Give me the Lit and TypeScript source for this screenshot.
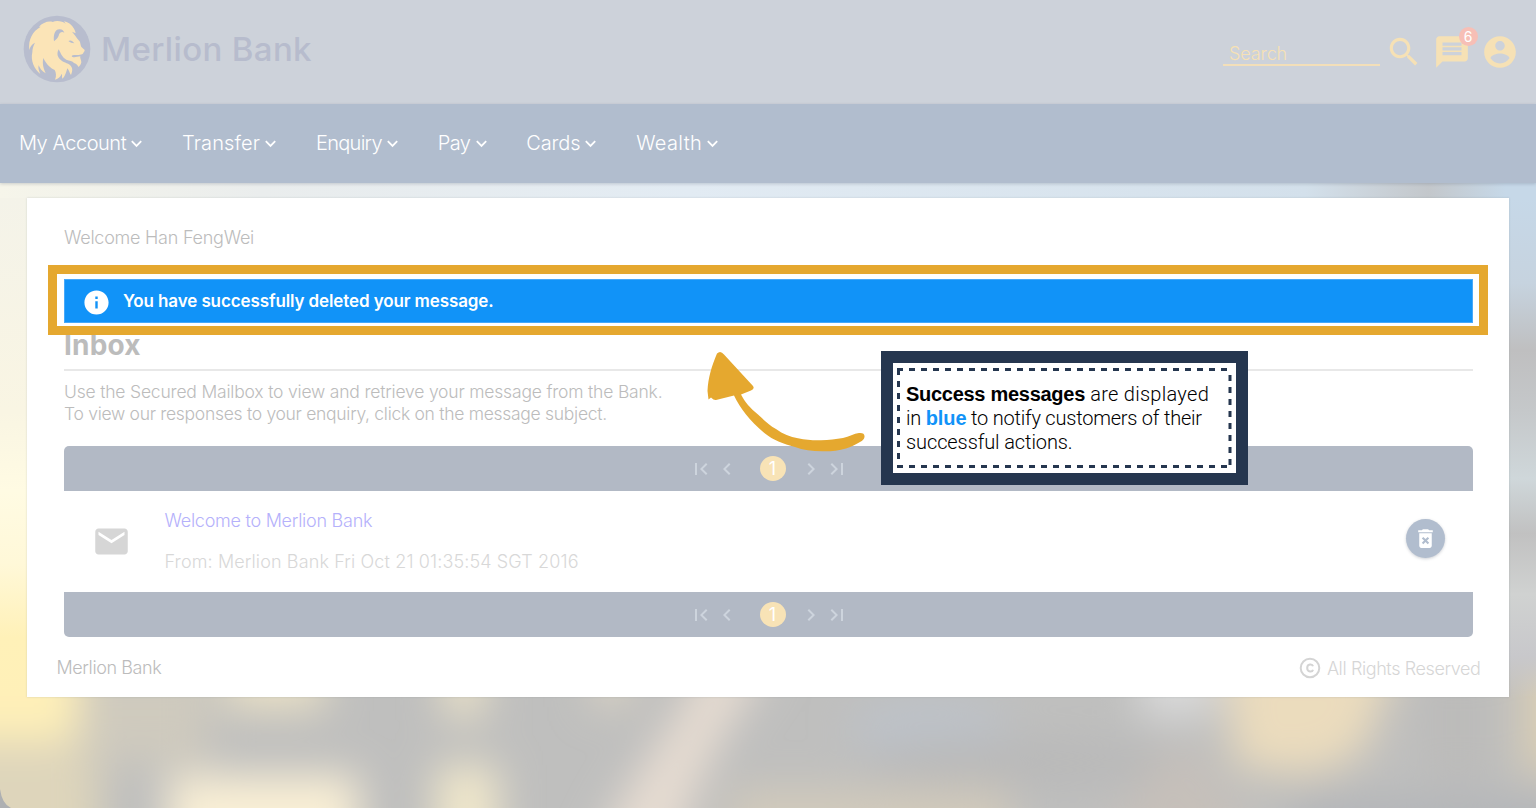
import { LitElement, html, css, svg } from "lit";
import { customElement, property } from "lit/decorators.js";
import { styleMap } from "lit/directives/style-map.js";

const ICONS: Record<string, string> = {
  search:
    "M15.5 14h-.79l-.28-.27C15.41 12.59 16 11.11 16 9.5 16 5.91 13.09 3 9.5 3S3 5.91 3 9.5 5.91 16 9.5 16c1.61 0 3.09-.59 4.23-1.57l.27.28v.79l5 4.99L20.49 19l-4.99-5zm-6 0C7.01 14 5 11.99 5 9.5S7.01 5 9.5 5 14 7.01 14 9.5 11.99 14 9.5 14z",
  message:
    "M20 2H4c-1.1 0-1.99.9-1.99 2L2 22l4-4h14c1.1 0 2-.9 2-2V4c0-1.1-.9-2-2-2zm-2 12H6v-2h12v2zm0-3H6V9h12v2zm0-3H6V6h12v2z",
  account:
    "M12 2C6.48 2 2 6.48 2 12s4.48 10 10 10 10-4.48 10-10S17.52 2 12 2zm0 3c1.66 0 3 1.34 3 3s-1.34 3-3 3-3-1.34-3-3 1.34-3 3-3zm0 14.2c-2.5 0-4.71-1.28-6-3.22.03-1.99 4-3.08 6-3.08 1.99 0 5.97 1.09 6 3.08-1.29 1.94-3.5 3.22-6 3.22z",
  info: "M12 2C6.48 2 2 6.48 2 12s4.48 10 10 10 10-4.48 10-10S17.52 2 12 2zm1 15h-2v-6h2v6zm0-8h-2V7h2v2z",
  first: "M18.41 16.59L13.82 12l4.59-4.59L17 6l-6 6 6 6zM6 6h2v12H6z",
  prev: "M15.41 7.41L14 6l-6 6 6 6 1.41-1.41L10.83 12z",
  next: "M10 6L8.59 7.41 13.17 12l-4.58 4.59L10 18l6-6z",
  last: "M5.59 7.41L10.18 12l-4.59 4.59L7 18l6-6-6-6zM16 6h2v12h-2z",
  mail: "M20 4H4c-1.1 0-1.99.9-1.99 2L2 18c0 1.1.9 2 2 2h16c1.1 0 2-.9 2-2V6c0-1.1-.9-2-2-2zm0 4l-8 5-8-5V6l8 5 8-5v2z",
  trash:
    "M6 19c0 1.1.9 2 2 2h8c1.1 0 2-.9 2-2V7H6v12zm2.46-7.12l1.41-1.41L12 12.59l2.12-2.12 1.41 1.41L13.41 14l2.12 2.12-1.41 1.41L12 15.41l-2.12 2.12-1.41-1.41L10.59 14l-2.13-2.12zM15.5 4l-1-1h-5l-1 1H5v2h14V4z",
};

@customElement("mb-icon")
class MbIcon extends LitElement {
  @property() name = "";
  static styles = css`
    :host { display: block; width: 24px; height: 24px; flex: none; }
    svg { display: block; width: 100%; height: 100%; fill: currentColor; }
  `;
  render() {
    return html`<svg viewBox="0 0 24 24"><path d=${ICONS[this.name] ?? ""} /></svg>`;
  }
}

@customElement("mb-pager")
class MbPager extends LitElement {
  static styles = css`
    :host {
      display: flex; align-items: center; justify-content: center;
      height: 45px; box-sizing: border-box; background: #b2b9c5; color: #cdd4dd;
    }
    .prev { margin-left: 2px; }
    .page {
      width: 26px; height: 25px; margin: 0 13px 0 21px; border-radius: 50%;
      background: #f8e3b6; color: #fff; display: grid; place-items: center;
      font: 400 18px/25px Inter, sans-serif;
    }
    .last { margin-left: 2px; }
  `;
  render() {
    return html`
      <mb-icon name="first"></mb-icon>
      <mb-icon class="prev" name="prev"></mb-icon>
      <span class="page">1</span>
      <mb-icon name="next"></mb-icon>
      <mb-icon class="last" name="last"></mb-icon>
    `;
  }
}

const backdrop = svg`
  <defs>
    <filter id="soft" filterUnits="userSpaceOnUse" x="-100" y="300" width="1736" height="450"><feGaussianBlur stdDeviation="20" /></filter>
    <linearGradient id="sky" x1="0" x2="1" y1="0" y2="0">
      <stop offset="0" stop-color="#f6f5ea" /><stop offset=".17" stop-color="#eaeded" />
      <stop offset=".45" stop-color="#e2ebf3" /><stop offset=".85" stop-color="#d3e0eb" />
      <stop offset=".93" stop-color="#c3c7cb" /><stop offset=".98" stop-color="#c6d8e8" />
    </linearGradient>
    <linearGradient id="west" gradientUnits="userSpaceOnUse" x1="0" x2="0" y1="15" y2="625">
      <stop offset="0" stop-color="#f4f3e9" /><stop offset=".35" stop-color="#f9f5e3" />
      <stop offset=".48" stop-color="#fffbe3" /><stop offset=".6" stop-color="#fff8d8" />
      <stop offset=".72" stop-color="#fff1b8" /><stop offset=".82" stop-color="#fff1b8" stop-opacity="0" />
    </linearGradient>
    <linearGradient id="east" gradientUnits="userSpaceOnUse" x1="0" x2="0" y1="15" y2="625">
      <stop offset="0" stop-color="#c6d8e8" /><stop offset=".14" stop-color="#c6d3df" />
      <stop offset=".25" stop-color="#bfbfc0" /><stop offset=".35" stop-color="#c5c8ca" />
      <stop offset=".46" stop-color="#cfd7da" /><stop offset=".55" stop-color="#c1c1c1" />
      <stop offset=".65" stop-color="#d0d2d1" /><stop offset=".75" stop-color="#c8c8cb" />
      <stop offset=".82" stop-color="#c8c8cb" stop-opacity="0" />
    </linearGradient>
  </defs>
  <rect width="1536" height="625" fill="#bfbfbe" />
  <rect width="1536" height="60" fill="url(#sky)" />
  <g filter="url(#soft)">
    <rect x="-90" y="400" width="168" height="156" fill="#fff0b8" />
    <rect x="-90" y="556" width="190" height="150" fill="#ded5bb" />
    <rect x="78" y="480" width="130" height="100" fill="#cfcabe" />
    <rect x="225" y="440" width="100" height="88" fill="#e9e0c6" />
    <rect x="444" y="440" width="40" height="96" fill="#ebe2c8" />
    <rect x="592" y="440" width="40" height="84" fill="#dad3c4" />
    <path d="M702 480h70C714 560 688 610 676 680h-84C618 600 670 560 702 480z" fill="#e6dcd1" />
    <ellipse cx="930" cy="545" rx="80" ry="30" fill="#bdc2c9" />
    <ellipse cx="1030" cy="580" rx="170" ry="26" fill="#b9b9b9" />
    <rect x="1140" y="450" width="74" height="84" fill="#dadada" />
    <path d="M1222 470h180l-40 100-50 22-76-8z" fill="#ebdcbd" />
    <rect x="1425" y="480" width="66" height="120" fill="#bcbbba" />
    <path d="M1524 470H1620V590H1524z" fill="#dccfb4" />
    <rect x="168" y="592" width="190" height="120" fill="#f9efd5" />
    <rect x="436" y="582" width="62" height="120" fill="#f0e7cb" />
    <rect x="730" y="606" width="280" height="80" fill="#d2cabb" />
    <path d="M1080 680L1180 556L1250 640V680z" fill="#c6c0ba" />
    <rect x="1290" y="612" width="300" height="80" fill="#b4b6b9" />
  </g>
  <rect width="27" height="500" y="15" fill="url(#west)" />
  <rect x="1509" y="15" width="27" height="500" fill="url(#east)" />
  <path d="M0 606Q2 621 11 625H0z" fill="#aeb0b2" />
`;

@customElement("app-root")
class AppRoot extends LitElement {
  private menu = [
    { label: "My Account", tracking: -0.48 },
    { label: "Transfer", tracking: 0.15 },
    { label: "Enquiry", tracking: -0.7 },
    { label: "Pay", tracking: -0.5 },
    { label: "Cards", tracking: -0.15 },
    { label: "Wealth", tracking: 0.35 },
  ];

  static styles = css`
    :host {
      display: block; position: relative; width: 1536px; height: 808px; overflow: hidden;
      font-family: Inter, "Open Sans", sans-serif; font-weight: 300; white-space: nowrap;
    }
    header {
      height: 104px; background: #cdd2da; display: flex; align-items: center;
      box-sizing: border-box; padding: 0 17px 0 23px; color: #f6e1b5;
    }
    .logo { width: 68px; height: 68px; margin-bottom: 7px; }
    .brand {
      margin: 0 0 6px 10px; font-weight: 500; font-size: 33px; line-height: 40px; color: #b7bccd;
      letter-spacing: 0.35px; flex: 1;
    }
    .search {
      width: 151px; height: 24px; padding-left: 6px; border-bottom: 2px solid #f3dfb9;
      font-size: 18px; line-height: 28px; margin-top: 1px; letter-spacing: -0.1px;
    }
    .tool { width: 38px; height: 38px; }
    .tool.find { margin-left: 5px; }
    .inbox { position: relative; margin: 0 10px; }
    .badge {
      position: absolute; left: 25.5px; top: -6px; width: 19px; height: 19px; border-radius: 50%;
      background: #f7bfb6; color: #fff; font-size: 14px; line-height: 19px; text-align: center; font-weight: 400;
    }
    nav {
      height: 79px; background: #b1bdce; color: #fff; padding: 0 0 2px 19px; display: flex; gap: 39.8px;
      font-size: 20px; box-shadow: 0 1px 3px rgba(80, 90, 110, .25); position: relative; z-index: 1;
      align-items: center; box-sizing: border-box;
    }
    .item { display: flex; align-items: center; gap: 5px; line-height: 26px; }
    .caret { width: 11px; height: 8px; fill: none; stroke: #fff; stroke-width: 1.8; margin-top: 3px; }
    .stage { position: relative; height: 625px; box-sizing: border-box; padding: 15px 27px 0; }
    .sky { position: absolute; left: 0; top: 0; width: 1536px; height: 625px; }
    .card {
      position: relative; height: 499px; box-sizing: border-box; padding: 29px 36px 0 37px; background: #fff;
      box-shadow: 0 0 2px rgba(100, 110, 120, .25); color: #bcbcbc;
      font-size: 18px;
    }
    .hello { line-height: 22px; height: 22px; letter-spacing: -0.25px; }
    .alert {
      position: relative; z-index: 2; margin-top: 30px; height: 44px; box-sizing: border-box;
      border: 1px solid #47a9fa; background: #1193f8; color: #fff; display: flex; align-items: center;
      padding-left: 17px; font-weight: 600; font-size: 17px; letter-spacing: -0.11px;
    }
    .alert mb-icon { width: 29px; height: 29px; margin-top: 2px; }
    .alert span { margin-left: 12px; }
    h1 { margin: 5px 0 0; font-size: 28px; line-height: 34px; height: 34px; font-weight: 700; letter-spacing: 0.2px; }
    .rule { margin-top: 7px; height: 2px; background: #e8e8e8; }
    .intro { margin: 10px 0 0; font-size: 17.5px; line-height: 22px; height: 44px; letter-spacing: -0.19px; }
    .intro .tight { letter-spacing: -0.29px; }
    .top { margin-top: 21px; border-radius: 5px 5px 0 0; }
    .bottom { border-radius: 0 0 5px 5px; }
    .row { height: 101px; display: flex; align-items: flex-start; }
    .mail { width: 39px; height: 39px; margin: 30.5px 0 0 28px; color: #d6d6d6; }
    .text { margin: 19px 0 0 33.5px; flex: 1; line-height: 22px; }
    .subject { color: #b5b1fb; letter-spacing: -0.26px; }
    .from { margin-top: 19px; color: #d8d8d8; letter-spacing: 0.12px; }
    .remove {
      width: 39px; height: 39px; border-radius: 50%; background: #b1bdce; color: #fff;
      margin: 28px 28px 0 0; display: grid; place-items: center; box-shadow: 0 1px 3px rgba(60, 70, 90, .25);
    }
    .remove mb-icon { width: 25px; height: 25px; }
    footer {
      display: flex; align-items: center; justify-content: space-between;
      margin: 19px -7.5px 0 -7.5px; height: 24px; letter-spacing: -0.4px;
    }
    .owner { margin-bottom: 2px; }
    .rights { display: flex; align-items: center; gap: 6px; color: #d6d6d6; }
    .copy { width: 22px; height: 22px; }
    .frame {
      position: absolute; z-index: 1; left: 48px; top: 265px; width: 1440px; height: 70px;
      box-sizing: border-box; border: 9px solid #e5a82f; background: #fff;
    }
    .arrow { position: absolute; left: 700px; top: 345px; width: 170px; height: 112px; }
    .note {
      position: absolute; left: 881px; top: 351px; width: 367px; height: 134px; box-sizing: border-box;
      border: 12px solid #25364f; background: #fff; color: #000; padding: 19px 0 0 13px;
      font-family: Roboto, sans-serif; font-size: 20px; line-height: 24px;
    }
    .note b { font-family: "Liberation Sans", Arial, sans-serif; font-weight: 700; letter-spacing: -0.28px; }
    .note .blue { color: #1193f8; letter-spacing: -0.1px; }
    .loose { letter-spacing: 0.28px; }
    .snug { letter-spacing: -0.22px; }
    .even { letter-spacing: -0.1px; }
    .dashes { position: absolute; left: 0; top: 0; width: 343px; height: 110px; }
  `;

  private logo() {
    return html`<svg class="logo" viewBox="69 43 204 204">
      <circle cx="171" cy="145" r="100" fill="#b8bdce" />
      <path fill="#fbe4b7" d="M88 148C84 116 98 92 122 78L117 78C127 67 145 60 158 64C170 58 188 62 197 69L192 62C206 64 224 78 227 98L216 93C224 102 229 110 236 119C243 124 240 134 245 140L254 148C254 153 251 154 250 157C247 163 235 163 222 163C217 164 214 165 216 168C224 173 232 167 241 167C239 172 244 178 244 185C243 192 239 196 236 199C232 192 227 189 222 187C218 181 208 180 199 177C188 172 183 160 176 146C170 158 172 168 180 176C188 186 203 186 212 195C220 204 216 214 213 223C208 216 207 208 202 203C199 212 197 224 188 234C184 229 188 222 185 220C181 229 176 234 165 237C170 226 168 216 164 208C153 203 140 193 130 172C126 190 131 204 137 218C125 211 119 202 116 194C113 204 118 212 121 220C103 205 91 181 97 155C97 143 101 133 105 126C96 130 90 139 88 148Z" />
      <path fill="#b8bdce" d="M162 122C160 104 164 86 178 86C186 85 191 91 193 96C185 91 177 97 176 105C174 112 168 116 162 122ZM205 121C211 117 218 120 223 128C216 126 211 127 205 121Z" />
    </svg>`;
  }

  render() {
    return html`
      <header>
        ${this.logo()}
        <div class="brand">Merlion Bank</div>
        <div class="search">Search</div>
        <mb-icon class="tool find" name="search"></mb-icon>
        <div class="inbox">
          <mb-icon class="tool" name="message"></mb-icon>
          <span class="badge">6</span>
        </div>
        <mb-icon class="tool" name="account"></mb-icon>
      </header>
      <nav>
        ${this.menu.map(
          ({ label, tracking }) => html`<div class="item">
            <span style=${styleMap({ letterSpacing: `${tracking}px` })}>${label}</span>
            <svg class="caret" viewBox="0 0 11 8"><path d="M.8 1.2l4.700 4.800L10.200 1.200" /></svg>
          </div>`
        )}
      </nav>
      <div class="stage">
        <svg class="sky" viewBox="0 0 1536 625">${backdrop}</svg>
        <main class="card">
          <div class="hello">Welcome Han FengWei</div>
          <div class="alert">
            <mb-icon name="info"></mb-icon><span>You have successfully deleted your message.</span>
          </div>
          <h1>Inbox</h1>
          <div class="rule"></div>
          <p class="intro">
            Use the Secured Mailbox to view and retrieve your message from the Bank.<br /><span class="tight"
              >To view our responses to your enquiry, click on the message subject.</span
            >
          </p>
          <mb-pager class="top"></mb-pager>
          <div class="row">
            <mb-icon class="mail" name="mail"></mb-icon>
            <div class="text">
              <div class="subject">Welcome to Merlion Bank</div>
              <div class="from">From: Merlion Bank Fri Oct 21 01:35:54 SGT 2016</div>
            </div>
            <div class="remove"><mb-icon name="trash"></mb-icon></div>
          </div>
          <mb-pager class="bottom"></mb-pager>
          <footer>
            <span class="owner">Merlion Bank</span>
            <span class="rights">
              <svg class="copy" viewBox="0 0 22 22" fill="none" stroke="#d4d4d4" stroke-width="2">
                <circle cx="11" cy="11" r="9.3" />
                <path d="M14 9.2C13.4 6.8 8.2 6.5 8.2 11s5.2 4.2 5.8 1.8" />
              </svg>
              <span>All Rights Reserved</span>
            </span>
          </footer>
        </main>
      </div>
      <div class="frame"></div>
      <svg class="arrow" viewBox="700 345 170 112" fill="#e5a82f">
        <path d="M717 353.5Q720.5 350 724 354.5L753 386Q755 389 751 390.5L741 394.5C745 402 750 408 758 414.5C764 420 769 425 776 429C783 434 790 437 798 438.3C806 440 813 440.5 821 440.3C829 440 836 439 843 438C849 436.5 854 433.5 859 433Q865 432.5 864.5 437Q864 440 860 442C855 445 851 447 846 448.5C838 451 830 451.5 822 451.3C812 451 803 450 795 447C783 444 773 440 765 433.5C757 427 751 421 746 414.5C741 408 737 402 734 395.5L716 400Q714 400.5 711 397.5L708.5 399.5L707.5 391C708 378 712 365 717 353.5Z" />
      </svg>
      <aside class="note">
        <svg class="dashes" viewBox="0 0 343 110" fill="none" stroke="#25364f" stroke-width="3">
          <path stroke-dasharray="6 6" d="M4 6.5H338M337 12V104M4 103.5H338M5.5 6V104" />
        </svg>
        <b>Success messages</b><span class="loose"> are displayed</span><br /><span class="snug"
          >in <b class="blue">blue</b> to notify customers of their</span
        ><br /><span class="even">successful actions.</span>
      </aside>
    `;
  }
}
